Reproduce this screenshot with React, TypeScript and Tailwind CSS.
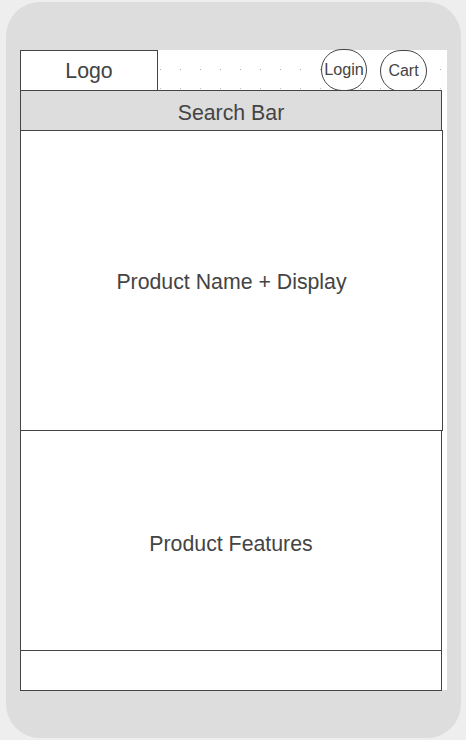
import React from "react";

const dots = Array.from({ length: 15 }, (_, i) => i);

export default function App() {
  return (
    <div
      className="w-[466px] h-[740px] bg-[#eeeeee] pt-[2px] pl-[6px] overflow-hidden"
      style={{ fontFamily: '"Liberation Sans", Arial, sans-serif' }}
    >
      <div className="w-[455px] h-[736px] rounded-[34px] bg-[#dddddd] pt-[48px] pl-[14px]">
        <div className="w-[427px] h-[640px] bg-white text-[#444444]">
          {/* header */}
          <div className="flex h-[40px]">
            <div className="w-[138px] h-[41px] border border-[#444444] flex items-center justify-center text-[21.3px] leading-none pt-[3px]">
              Logo
            </div>
            <div className="relative flex-1 flex justify-end items-start gap-[13px] pr-[20px]">
              <div className="absolute inset-0 flex flex-col pl-[2px] pt-[19px] gap-[18px] pointer-events-none">
                <div className="flex gap-[19px]">
                  {dots.map((d) => (
                    <span key={d} className="w-[1px] h-[1px] bg-[#aaaaaa]" />
                  ))}
                </div>
                <div className="flex gap-[19px]">
                  {dots.map((d) => (
                    <span key={d} className="w-[1px] h-[1px] bg-[#bbbbbb]" />
                  ))}
                </div>
              </div>
              <div className="relative -mt-px w-[46px] h-[42px] rounded-full border border-[#444444] bg-white flex items-center justify-center text-[16.2px] leading-none pb-[1px]">
                Login
              </div>
              <div className="relative w-[47px] h-[42px] rounded-full border border-[#444444] bg-white flex items-center justify-center text-[16px] leading-none">
                Cart
              </div>
            </div>
          </div>
          {/* search bar */}
          <div className="relative w-[422px] h-[41px] border border-[#444444] bg-[#dddddd] flex items-center justify-center text-[21.3px] leading-none pt-[7px]">
            Search Bar
          </div>
          {/* product name */}
          <div className="w-[423px] h-[301px] -mt-px border border-[#444444] flex items-center justify-center text-[21.3px] leading-none pt-[4px]">
            Product Name + Display
          </div>
          {/* features */}
          <div className="w-[422px] h-[221px] -mt-px border border-[#444444] flex items-center justify-center text-[21.3px] leading-none pt-[9px]">
            Product Features
          </div>
          {/* footer */}
          <div className="w-[422px] h-[41px] -mt-px border border-[#444444]" />
        </div>
      </div>
    </div>
  );
}
